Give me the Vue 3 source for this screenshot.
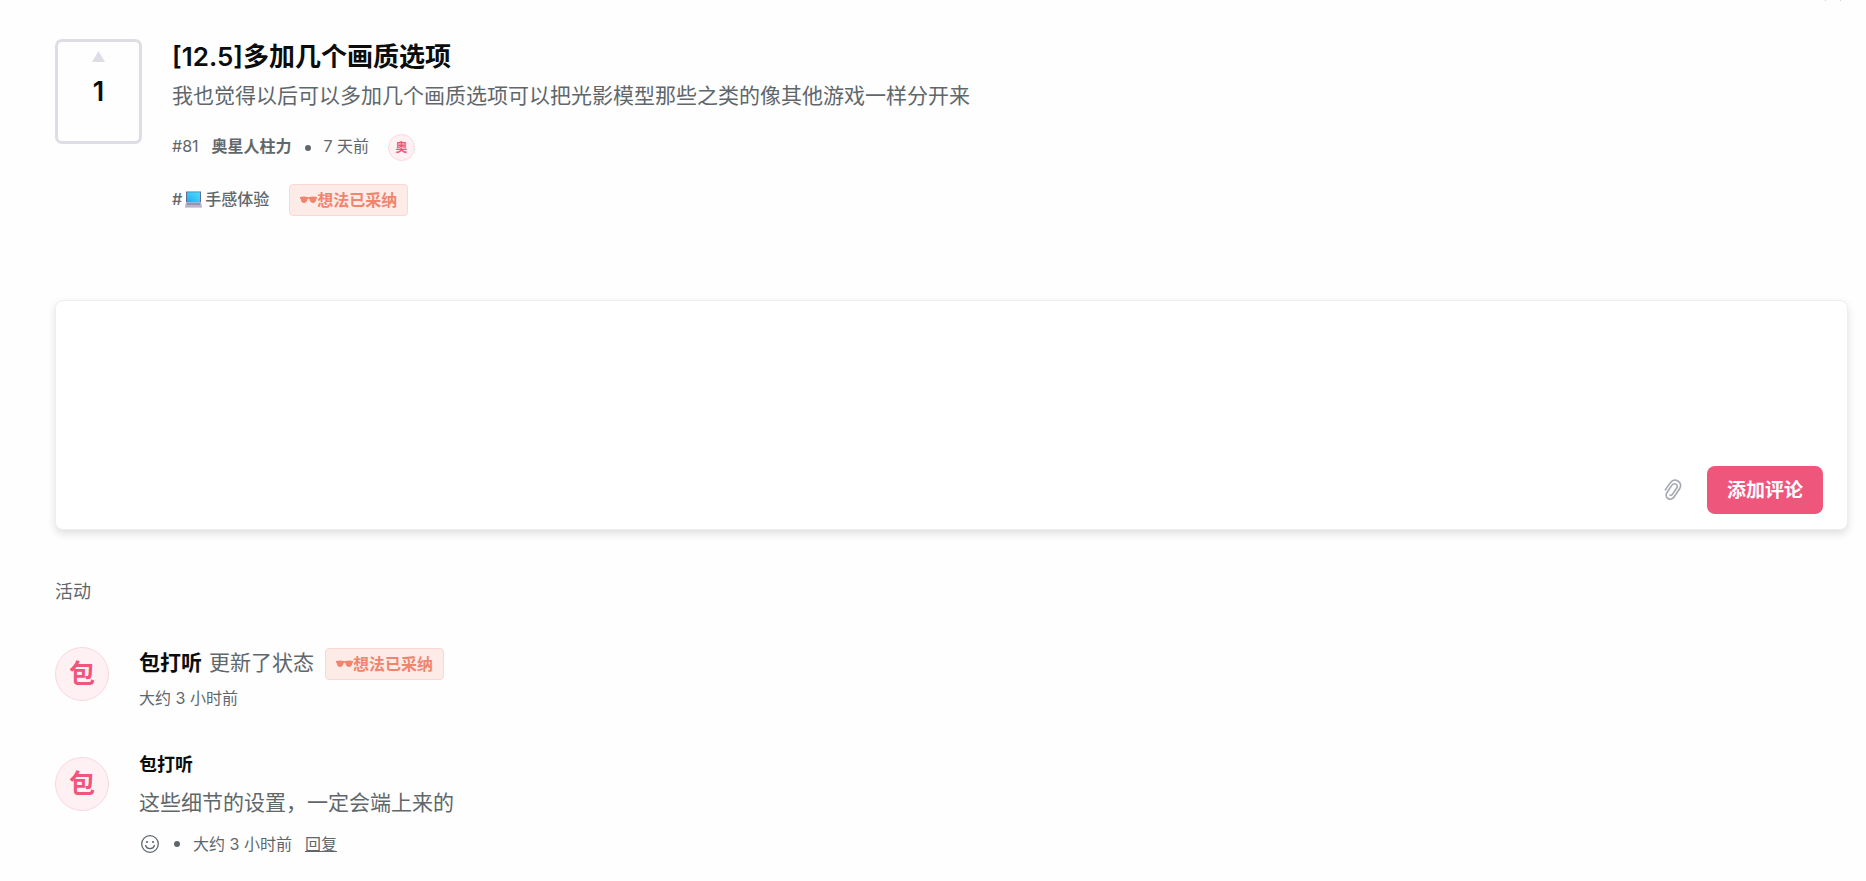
<template>
  <main class="page">
    <button class="close-button" type="button" aria-label="关闭">
      <svg viewBox="0 0 18 18" width="18" height="18">
        <path d="M1 1L17 17M17 1L1 17" fill="none" stroke="#60676b" stroke-width="1.5" />
      </svg>
    </button>

    <article class="post">
      <button class="vote" type="button" aria-label="投票">
        <svg class="vote-arrow" viewBox="0 0 13 11" width="13" height="11">
          <path d="M6.5 0L13 11H0z" fill="#dddde6" />
        </svg>
        <span class="vote-count">{{ post.votes }}</span>
      </button>

      <div class="post-body">
        <h1>{{ post.title }}</h1>
        <p class="description">{{ post.description }}</p>
        <div class="meta">
          <span>#{{ post.number }}</span>
          <strong class="author">{{ post.author }}</strong>
          <span class="dot"></span>
          <span>{{ post.time }}</span>
          <span class="avatar small">{{ post.author[0] }}</span>
        </div>
        <div class="tags">
          <a class="tag" href="#">
            <span>#</span>
            <svg viewBox="0 0 17 17" width="17" height="17">
              <defs>
                <linearGradient id="screen" x1="0" y1="1" x2="1" y2="0">
                  <stop offset="0" stop-color="#28a4e8" />
                  <stop offset="0.5" stop-color="#38c6f7" />
                  <stop offset="1" stop-color="#48def8" />
                </linearGradient>
              </defs>
              <path d="M1 0.5h15v11H1z" fill="#5d6d9c" />
              <path d="M2 1.3h13v10H2z" fill="url(#screen)" />
              <path d="M1 11.5h15l1 4H0z" fill="#b9b5ca" />
              <path d="M2 12.3h13l.3 1.4H1.7z" fill="#8f8aa5" />
              <path d="M0 15.3h17v1.2H0z" fill="#a9a3bc" />
            </svg>
            <span>{{ post.tag }}</span>
          </a>
          <span class="status">
            <svg viewBox="0 0 17 10" width="17" height="10"><path :d="glasses" /></svg>
            <span>{{ status }}</span>
          </span>
        </div>
      </div>
    </article>

    <form class="composer" @submit.prevent="addComment">
      <textarea v-model="comment" aria-label="评论"></textarea>
      <div class="composer-actions">
        <button class="attach" type="button" aria-label="添加附件">
          <svg viewBox="0 0 18 22" width="18" height="22">
            <path
              d="M1.4 10.8L6.2 3.9C8.2 1.2 11.2 .4 13.8 2C16.9 3.9 17.4 6.9 15.6 9.7L10.6 17.3C8.8 20 6.2 21 4 19.5C1.7 18 1.6 15.6 3.1 13.3L7.8 6.4C8.9 4.8 10.7 4.4 12.1 5.3C13.5 6.2 13.6 7.7 12.6 9.2L8.2 15.6C7.5 16.6 6.5 16.6 6 16"
              fill="none"
              stroke="#a5a7b1"
              stroke-width="1.6"
              stroke-linecap="round"
            />
          </svg>
        </button>
        <button class="submit" type="submit">添加评论</button>
      </div>
    </form>

    <section class="activity">
      <h2>活动</h2>

      <div class="activity-item">
        <span class="avatar">包</span>
        <div class="activity-body">
          <div class="change">
            <strong>包打听</strong>
            <span>更新了状态</span>
            <span class="status">
              <svg viewBox="0 0 17 10" width="17" height="10"><path :d="glasses" /></svg>
              <span>{{ status }}</span>
            </span>
          </div>
          <div class="time">大约 3 小时前</div>
        </div>
      </div>

      <div class="activity-item with-comment">
        <span class="avatar">包</span>
        <div class="activity-body">
          <strong class="name">包打听</strong>
          <p class="comment">这些细节的设置，一定会端上来的</p>
          <div class="comment-footer">
            <button class="react" type="button" aria-label="添加表情">
              <svg viewBox="0 0 18 18" width="18" height="18">
                <circle cx="9" cy="9" r="8.3" fill="none" stroke="#60676b" stroke-width="1.3" />
                <circle cx="6" cy="7" r="1.1" fill="#60676b" />
                <circle cx="12" cy="7" r="1.1" fill="#60676b" />
                <path d="M4.6 10.5C5.8 14.6 12.2 14.6 13.4 10.5" fill="none" stroke="#60676b" stroke-width="1.3" stroke-linecap="round" />
              </svg>
            </button>
            <span class="dot"></span>
            <span>大约 3 小时前</span>
            <a class="reply" href="#">回复</a>
          </div>
        </div>
      </div>
    </section>
  </main>
</template>

<script setup>
import { ref } from 'vue'

const post = {
  number: 81,
  votes: 1,
  title: '[12.5]多加几个画质选项',
  description: '我也觉得以后可以多加几个画质选项可以把光影模型那些之类的像其他游戏一样分开来',
  author: '奥星人柱力',
  time: '7 天前',
  tag: '手感体验'
}

const status = '想法已采纳'
const glasses = 'M0 2C2.5 1.3 5.5 1.3 7.3 2Q8.5 2.3 9.7 2C11.5 1.3 14.5 1.3 17 2V3.6L16.2 4C16.1 6.8 15 8 12.8 8C10.7 8 9.8 6.4 9.4 4.1Q8.5 3.6 7.6 4.1C7.2 6.4 6.3 8 4.2 8C2 8 .9 6.8 .8 4L0 3.6z'

const comment = ref('')

function addComment() {
  comment.value = ''
}
</script>

<style>
body {
  background: #fefefe;
}
</style>

<style scoped>
.page {
  position: relative;
  padding: 39px 18px 24px 55px;
  font-family: Inter, "Noto Sans CJK SC", sans-serif;
  font-size: 16px;
  line-height: 24px;
  color: #60676b;
}
h1, h2, p {
  margin: 0;
}
button {
  padding: 0;
  border: none;
  background: none;
  font-family: inherit;
  cursor: pointer;
}
svg {
  display: block;
  flex-shrink: 0;
}
.close-button {
  position: absolute;
  top: -17px;
  right: 24px;
}

.post {
  display: flex;
  align-items: flex-start;
  gap: 30px;
}
.vote {
  display: flex;
  flex-direction: column;
  align-items: center;
  flex-shrink: 0;
  gap: 13px;
  box-sizing: border-box;
  width: 87px;
  height: 105px;
  padding-top: 9px;
  border: 3px solid #dddde6;
  border-radius: 7px;
}
.vote-count {
  font-size: 27px;
  line-height: 34px;
  font-weight: 600;
  color: #0b0c0d;
}
h1 {
  font-size: 26px;
  line-height: 36px;
  font-weight: 600;
  color: #0b0c0d;
}
.description {
  margin-top: 7px;
  font-size: 21px;
  line-height: 28px;
}
.meta {
  display: flex;
  align-items: flex-start;
  gap: 13px;
  margin-top: 24px;
}
.author {
  font-weight: 600;
}
.dot {
  align-self: center;
  width: 6px;
  height: 6px;
  border-radius: 50%;
  background: #60676b;
}
.avatar {
  display: flex;
  align-items: center;
  justify-content: center;
  flex-shrink: 0;
  box-sizing: border-box;
  width: 54px;
  height: 54px;
  border: 1px solid #fbd7e0;
  border-radius: 50%;
  background: #fef0f3;
  color: #ef567c;
  font-size: 26px;
  font-weight: 600;
}
.avatar.small {
  width: 27px;
  height: 27px;
  margin-left: 6px;
  font-size: 12px;
}
.tags {
  display: flex;
  align-items: center;
  gap: 20px;
  margin-top: 23px;
}
.tag {
  display: flex;
  align-items: center;
  gap: 3px;
  padding-bottom: 2px;
  color: inherit;
  font-weight: 500;
  text-decoration: none;
}
.status {
  display: flex;
  align-items: center;
  box-sizing: border-box;
  height: 32px;
  padding: 0 10px;
  border: 1px solid #fbd8d2;
  border-radius: 4px;
  background: #fdebe8;
  color: #ef856e;
  font-size: 16px;
  font-weight: 600;
}
.status path {
  fill: #ef856e;
}

.composer {
  display: flex;
  flex-direction: column;
  margin-top: 84px;
  border: 1px solid #eeeeef;
  border-radius: 8px;
  background: white;
  box-shadow: 0 4px 8px rgba(0, 0, 0, 0.12);
}
.composer textarea {
  height: 145px;
  padding: 20px 24px;
  box-sizing: border-box;
  border: none;
  border-radius: 8px;
  outline: none;
  resize: none;
  background: none;
  font: inherit;
}
.composer-actions {
  display: flex;
  align-items: center;
  justify-content: flex-end;
  gap: 25px;
  padding: 20px 24px 15px;
}
.submit {
  height: 48px;
  padding: 0 20px 4px;
  border-radius: 8px;
  background: #ef567c;
  color: white;
  font-size: 19px;
  font-weight: 700;
}

.activity h2 {
  margin-top: 50px;
  font-size: 18px;
  line-height: 24px;
  font-weight: 400;
}
.activity-item {
  display: flex;
  align-items: flex-start;
  gap: 30px;
  margin-top: 43px;
}
.with-comment .avatar {
  margin-top: 4px;
}
.activity-body strong {
  color: #0b0c0d;
  font-weight: 600;
}
.change {
  display: flex;
  align-items: flex-start;
  gap: 7px;
  font-size: 21px;
  line-height: 32px;
}
.change .status {
  margin-top: 1px;
  margin-left: 4px;
}
.time {
  margin-top: 6px;
}
.name {
  display: block;
  font-size: 18px;
}
.comment {
  margin-top: 12px;
  font-size: 21px;
  line-height: 28px;
}
.comment-footer {
  display: flex;
  align-items: center;
  gap: 13px;
  margin-top: 15px;
}
.react {
  padding: 0 2px;
}
.reply {
  color: inherit;
  text-decoration: underline;
}
</style>
